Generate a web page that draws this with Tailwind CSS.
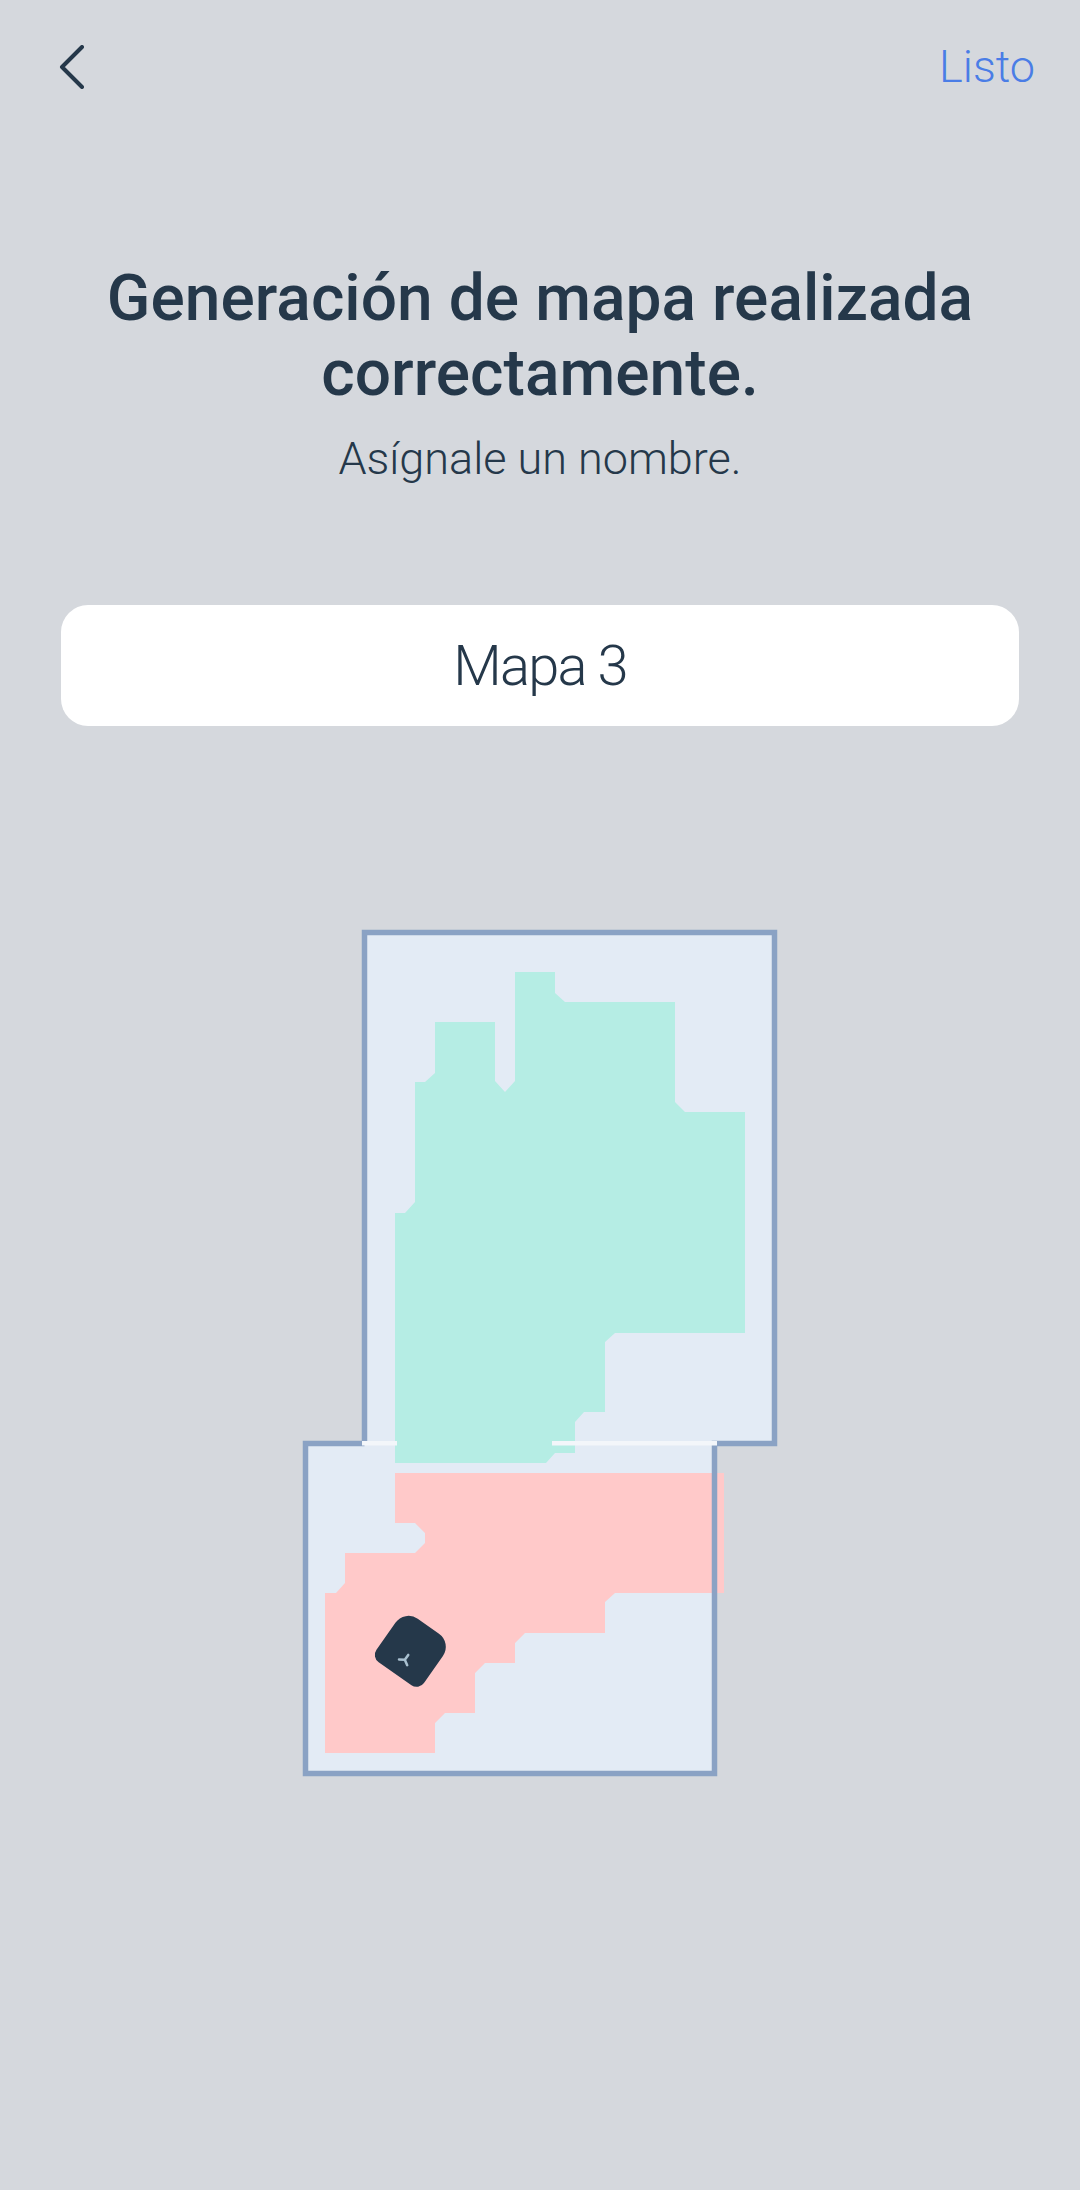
<!DOCTYPE html>
<html lang="es">
<head>
  <meta charset="UTF-8" />
  <meta name="viewport" content="width=device-width, initial-scale=1.0" />
  <title>Nombre del mapa</title>
  <script src="https://cdn.jsdelivr.net/npm/@tailwindcss/browser@4"></script>
</head>
<body class="bg-[#d5d8dd] text-[#25384a] font-['Roboto',sans-serif]">
  <div class="w-[1080px] h-[2190px] overflow-hidden">
    <!-- Top bar -->
    <div class="flex items-center justify-between pl-[58px] pr-[45px] pt-[40px] h-[94px]">
      <svg class="w-[28px] h-[44px]" viewBox="0 0 28 44" fill="none">
        <path d="M24 2 L4 22 L24 42" stroke="#25384a" stroke-width="4" stroke-linecap="round" stroke-linejoin="round" />
      </svg>
      <button class="text-[45px] leading-[54px] font-light text-[#4a7de6]">Listo</button>
    </div>

    <!-- Heading -->
    <div class="mt-[167px] text-center">
      <h1 class="text-[64px] leading-[75px] font-medium tracking-[0.05px]">Generación de mapa realizada<br />correctamente.</h1>
      <p class="mt-[21px] text-[45px] leading-[54px] font-light">Asígnale un nombre.</p>
    </div>

    <!-- Map name -->
    <div class="mt-[119px] mx-[61px] h-[121px] bg-white rounded-[27px] flex items-center justify-center">
      <span class="text-[56px] font-light tracking-[-1.8px]">Mapa 3</span>
    </div>

    <!-- Floor plan -->
    <svg class="mt-[174px] block" width="1080" height="900" viewBox="0 900 1080 900">
      <polygon fill="#e3ebf5" points="364,932 775,932 775,1444 715,1444 715,1773 305,1773 305,1444 364,1444" />
      <polygon fill="#b5ede4" points="515,972 555,972 555,993 565,1002 675,1002 675,1102 685,1112 745,1112 745,1333 615,1333 605,1342 605,1412 584,1412 575,1422 575,1453 555,1453 546,1463 395,1463 395,1213 405,1213 415,1202 415,1082 425,1082 435,1073 435,1022 495,1022 495,1081 505,1092 515,1081" />
      <polygon fill="#ffc9c9" points="395,1473 724,1473 724,1593 615,1593 605,1602 605,1633 525,1633 515,1643 515,1663 485,1663 475,1673 475,1713 445,1713 435,1723 435,1753 325,1753 325,1593 336,1593 345,1583 345,1553 415,1553 425,1543 425,1533 415,1523 395,1523" />
      <polyline fill="none" stroke="#8aa2c4" stroke-width="5.5" stroke-linejoin="miter" points="364.5,1441 364.5,932.5 774.5,932.5 774.5,1443.5 714.5,1443.5 714.5,1773.5 305.5,1773.5 305.5,1443.5 364.5,1443.5" />
      <!-- Doorways -->
      <rect x="362" y="1441" width="35" height="4.5" fill="#f3f6fa" />
      <rect x="552" y="1441" width="165" height="4.5" fill="#f3f6fa" />
      <!-- Robot -->
      <g transform="translate(411.7 1650) rotate(35)">
        <path fill="#25384a" d="M-13 -29 H13 A16 16 0 0 1 29 -13 V20 A9 9 0 0 1 20 29 H-20 A9 9 0 0 1 -29 20 V-13 A16 16 0 0 1 -13 -29 Z" />
        <path fill="none" stroke="#a9c0d0" stroke-width="2.5" stroke-linecap="round" d="M0 12 V6 M0 12 L5 15 M0 12 L-5 15" />
      </g>
    </svg>
  </div>
</body>
</html>
